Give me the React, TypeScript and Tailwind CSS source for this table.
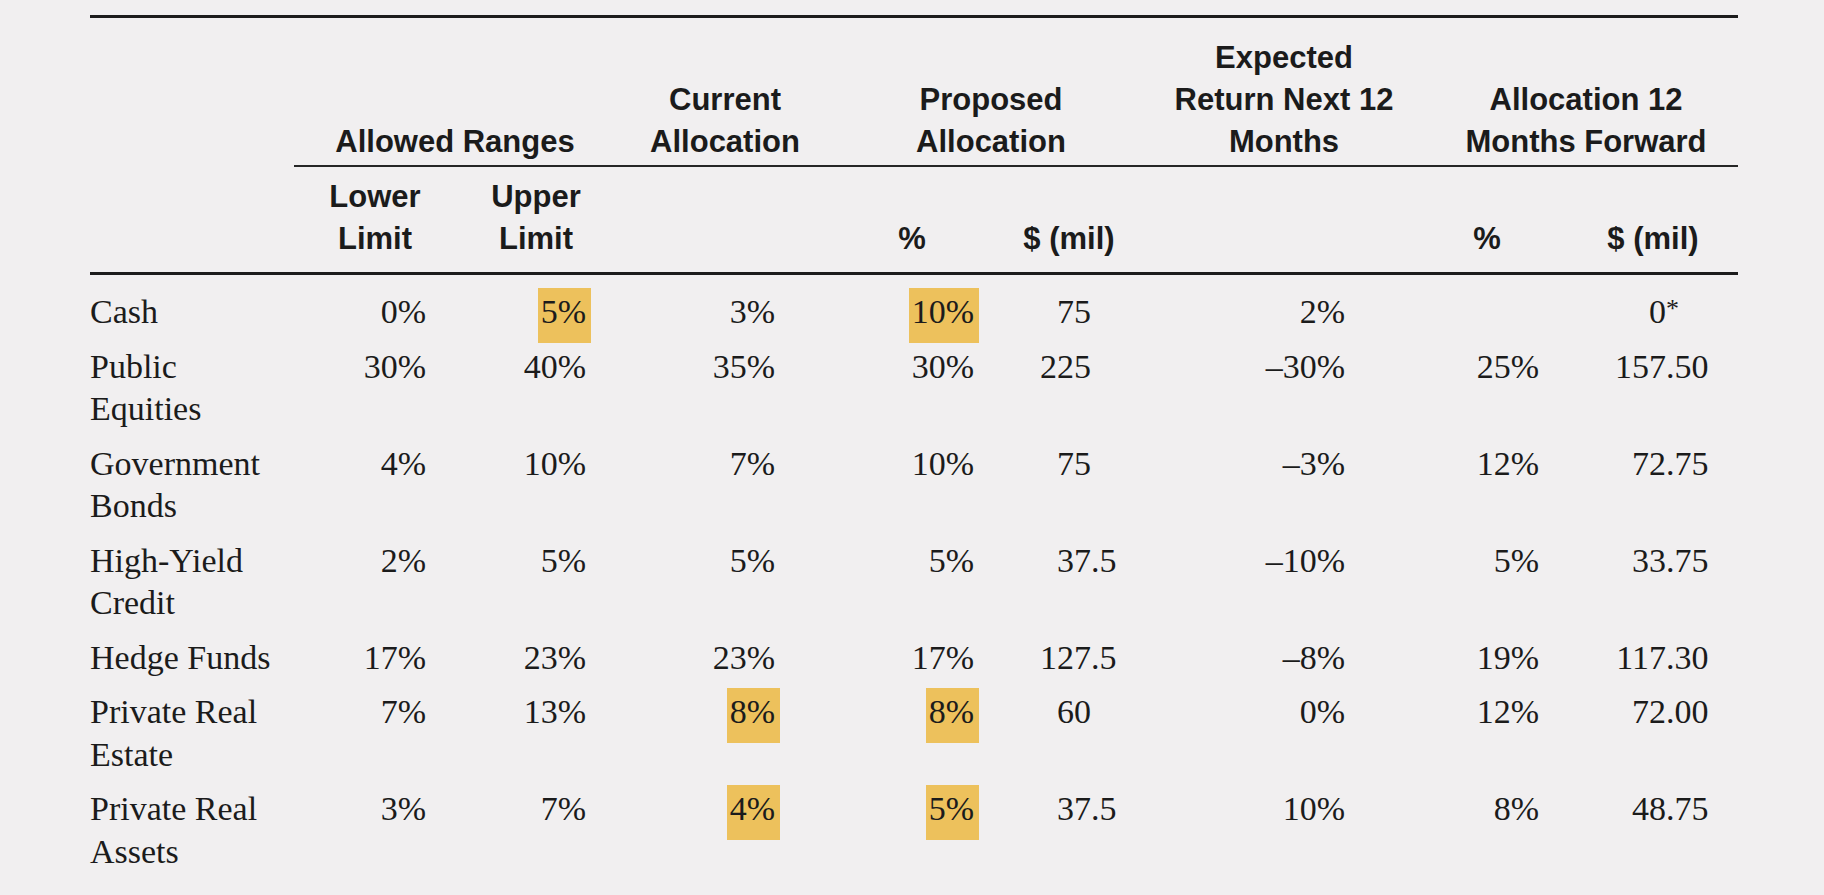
import React from "react";

const COLS = "grid grid-cols-[204px_162px_160px_218px_156px_158px_272px_134px_184px]";

interface Row {
  label: string[];
  lower: string;
  upper: string;
  current: string;
  prop: string;
  mil: string;
  ret: string;
  fwd: string;
  fwdMil: string;
  hl?: string[];
}

const rows: Row[] = [
  { label: ["Cash"], lower: "0%", upper: "5%", current: "3%", prop: "10%", mil: "75", ret: "2%", fwd: "", fwdMil: "0*", hl: ["upper", "prop"] },
  { label: ["Public", "Equities"], lower: "30%", upper: "40%", current: "35%", prop: "30%", mil: "225", ret: "–30%", fwd: "25%", fwdMil: "157.50" },
  { label: ["Government", "Bonds"], lower: "4%", upper: "10%", current: "7%", prop: "10%", mil: "75", ret: "–3%", fwd: "12%", fwdMil: "72.75" },
  { label: ["High-Yield", "Credit"], lower: "2%", upper: "5%", current: "5%", prop: "5%", mil: "37.5", ret: "–10%", fwd: "5%", fwdMil: "33.75" },
  { label: ["Hedge Funds"], lower: "17%", upper: "23%", current: "23%", prop: "17%", mil: "127.5", ret: "–8%", fwd: "19%", fwdMil: "117.30" },
  { label: ["Private Real", "Estate"], lower: "7%", upper: "13%", current: "8%", prop: "8%", mil: "60", ret: "0%", fwd: "12%", fwdMil: "72.00", hl: ["current", "prop"] },
  { label: ["Private Real", "Assets"], lower: "3%", upper: "7%", current: "4%", prop: "5%", mil: "37.5", ret: "10%", fwd: "8%", fwdMil: "48.75", hl: ["current", "prop"] },
];

function Mark({ on, children }: { on?: boolean; children: React.ReactNode }) {
  if (!on) return <>{children}</>;
  return (
    <span className="inline-block -mt-[3px] -mb-[9px] pt-[3px] pb-[9px] pl-[3px] pr-[5px] -mr-[5px] bg-[#edc15c]">
      {children}
    </span>
  );
}

// integer part right-aligned, fraction hangs in a fixed slot so the points line up
function Dec({ value, frac }: { value: string; frac: string }) {
  const m = value.match(/^([^.*]*)(.*)$/);
  const int = m ? m[1] : value;
  const rest = m ? m[2] : "";
  return (
    <span className="inline-flex justify-end">
      <span>{int}</span>
      <span className={`${frac} text-left`}>
        {rest === "*" ? <span className="text-[26px] leading-[0] relative -top-[6px]">*</span> : rest}
      </span>
    </span>
  );
}

export default function App() {
  const head = "font-['Liberation_Sans',Arial,sans-serif] font-bold text-[31px] leading-[42px] text-[#1b1b1b]";
  const body = "font-['Liberation_Serif','Times_New_Roman',serif] text-[34px] leading-[42.5px] text-[#1b1b1b]";

  return (
    <div className="min-h-screen w-full bg-[#f1eff0] overflow-hidden">
      <div className="ml-[90px] mt-[15px] w-[1648px] border-t-[3px] border-[#1c1c1c]">
        {/* header */}
        <div className={`${COLS} ${head} text-center`}>
          <div />
          <div className="col-span-2 flex flex-col justify-end pt-[19px] pb-[2px] border-b-2 border-[#262626]">Allowed Ranges</div>
          <div className="flex flex-col justify-end pt-[19px] pb-[2px] border-b-2 border-[#262626]">
            Current<br />Allocation
          </div>
          <div className="col-span-2 flex flex-col justify-end pt-[19px] pb-[2px] border-b-2 border-[#262626]">
            Proposed<br />Allocation
          </div>
          <div className="flex flex-col justify-end pt-[19px] pb-[2px] border-b-2 border-[#262626]">
            Expected<br />Return Next 12<br />Months
          </div>
          <div className="col-span-2 flex flex-col justify-end pt-[19px] pb-[2px] pl-[14px] border-b-2 border-[#262626]">
            Allocation 12<br />Months Forward
          </div>

          <div className="border-b-[3px] border-[#1c1c1c]" />
          <div className="flex flex-col justify-end pt-[9px] pb-[12px] border-b-[3px] border-[#1c1c1c]">Lower<br />Limit</div>
          <div className="flex flex-col justify-end pt-[9px] pb-[12px] border-b-[3px] border-[#1c1c1c]">Upper<br />Limit</div>
          <div className="border-b-[3px] border-[#1c1c1c]" />
          <div className="flex flex-col justify-end pt-[9px] pb-[12px] border-b-[3px] border-[#1c1c1c]">%</div>
          <div className="flex flex-col justify-end pt-[9px] pb-[12px] border-b-[3px] border-[#1c1c1c]">$ (mil)</div>
          <div className="border-b-[3px] border-[#1c1c1c]" />
          <div className="flex flex-col justify-end pt-[9px] pb-[12px] border-b-[3px] border-[#1c1c1c]">%</div>
          <div className="flex flex-col justify-end pt-[9px] pb-[12px] pl-[14px] border-b-[3px] border-[#1c1c1c]">$ (mil)</div>
        </div>

        {/* body */}
        <div className={`${COLS} ${body} pt-[10px]`}>
          {rows.map((r) => {
            const hl = r.hl || [];
            return (
              <React.Fragment key={r.label.join(" ")}>
                <div className="py-[6px]">
                  {r.label.map((l) => (
                    <div key={l}>{l}</div>
                  ))}
                </div>
                <div className="py-[6px] pr-[30px] text-right">{r.lower}</div>
                <div className="py-[6px] pr-[30px] text-right">
                  <Mark on={hl.includes("upper")}>{r.upper}</Mark>
                </div>
                <div className="py-[6px] pr-[59px] text-right">
                  <Mark on={hl.includes("current")}>{r.current}</Mark>
                </div>
                <div className="py-[6px] pr-[16px] text-right">
                  <Mark on={hl.includes("prop")}>{r.prop}</Mark>
                </div>
                <div className="py-[6px] pr-[32px] text-right">
                  <Dec value={r.mil} frac="w-[25px]" />
                </div>
                <div className="py-[6px] pr-[75px] text-right">{r.ret}</div>
                <div className="py-[6px] pr-[15px] text-right">{r.fwd}</div>
                <div className="py-[6px] pr-[30px] text-right">
                  <Dec value={r.fwdMil} frac="w-[42px]" />
                </div>
              </React.Fragment>
            );
          })}
        </div>
      </div>
    </div>
  );
}
